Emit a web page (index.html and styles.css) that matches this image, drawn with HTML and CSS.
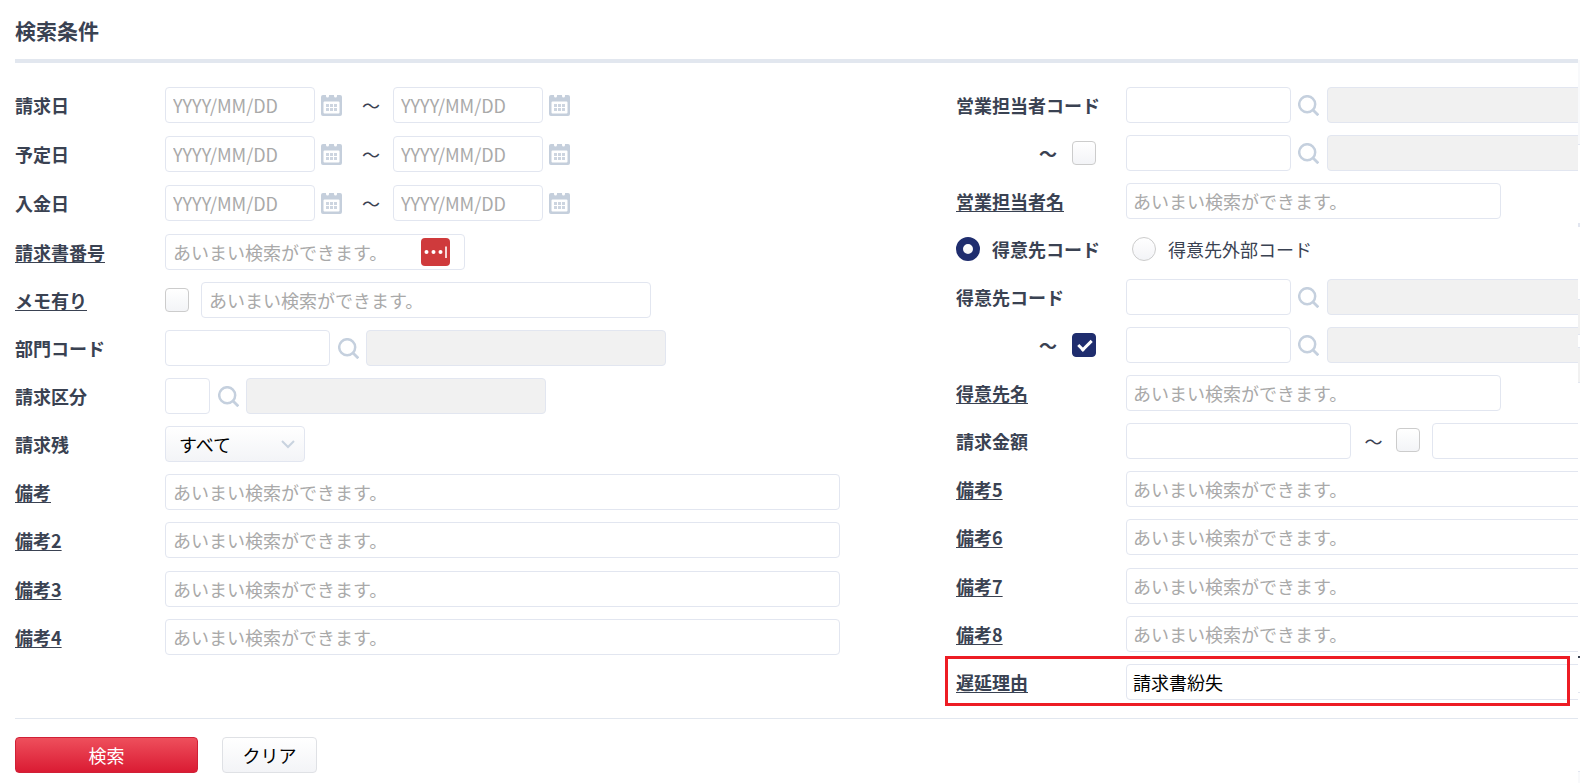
FILE: index.html
```html
<!DOCTYPE html>
<html lang="ja">
<head>
<meta charset="utf-8">
<title>検索条件</title>
<link rel="stylesheet" href="styles.css">
</head>
<body>
<svg class="defs" aria-hidden="true">
  <symbol id="cal" viewBox="0 0 21 21">
    <path fill="#c5cfdc" fill-rule="evenodd" d="M2 0H5V1Q5 2.500 6.500 2.500T8 1V0H13V1Q13 2.500 14.500 2.500T16 1V0H19Q21 0 21 2V19Q21 21 19 21H2Q0 21 0 19V2Q0 0 2 0ZM3.500 6.500Q2.500 6.500 2.500 7.500V17.500Q2.500 18.500 3.500 18.500H17.500Q18.500 18.500 18.500 17.500V7.500Q18.500 6.500 17.500 6.500Z"/>
    <path fill="#cdd5e0" d="M5 9h3v3H5zM9 9h3v3H9zM13 9h3v3h-3zM5 13h3v3H5zM9 13h3v3H9zM13 13h3v3h-3z"/>
  </symbol>
  <symbol id="mag" viewBox="0 0 21 21">
    <circle cx="9.200" cy="9.200" r="8" fill="none" stroke="#c5d0de" stroke-width="2.500"/>
    <path d="M14.800 14.800l5.500 5.500" fill="none" stroke="#c5d0de" stroke-width="2.700"/>
  </symbol>
</svg>
<form class="panel">
  <h1 class="title">検索条件</h1>
  <div class="columns">
    <div class="column column-left">
      <div class="row row-tall">
        <label class="label" for="bill-from">請求日</label>
        <input class="field date" id="bill-from" placeholder="YYYY/MM/DD"><button type="button" class="icon cal" aria-label="カレンダー"><svg><use href="#cal"/></svg></button><span class="tilde">～</span><input class="field date" aria-label="請求日 終了" placeholder="YYYY/MM/DD"><button type="button" class="icon cal" aria-label="カレンダー"><svg><use href="#cal"/></svg></button>
      </div>
      <div class="row row-tall">
        <label class="label" for="plan-from">予定日</label>
        <input class="field date" id="plan-from" placeholder="YYYY/MM/DD"><button type="button" class="icon cal" aria-label="カレンダー"><svg><use href="#cal"/></svg></button><span class="tilde">～</span><input class="field date" aria-label="予定日 終了" placeholder="YYYY/MM/DD"><button type="button" class="icon cal" aria-label="カレンダー"><svg><use href="#cal"/></svg></button>
      </div>
      <div class="row row-tall">
        <label class="label" for="pay-from">入金日</label>
        <input class="field date" id="pay-from" placeholder="YYYY/MM/DD"><button type="button" class="icon cal" aria-label="カレンダー"><svg><use href="#cal"/></svg></button><span class="tilde">～</span><input class="field date" aria-label="入金日 終了" placeholder="YYYY/MM/DD"><button type="button" class="icon cal" aria-label="カレンダー"><svg><use href="#cal"/></svg></button>
      </div>
      <div class="row">
        <label class="label fuzzy" for="bill-no">請求書番号</label>
        <div class="badged"><input class="field w300" id="bill-no" placeholder="あいまい検索ができます。"><svg class="badge" viewBox="0 0 29 28"><rect width="29" height="28" rx="4" fill="#cf3a3c"/><g fill="#fff"><circle cx="5.500" cy="14" r="2"/><circle cx="12.500" cy="14" r="2"/><circle cx="19.500" cy="14" r="2"/><path d="M24 8.500h2v11.500h-2z" opacity=".8"/></g></svg></div>
      </div>
      <div class="row">
        <label class="label fuzzy" for="memo">メモ有り</label>
        <input type="checkbox" class="check" aria-label="メモ有り"><input class="field w450 after-check" id="memo" placeholder="あいまい検索ができます。">
      </div>
      <div class="row">
        <label class="label" for="dept">部門コード</label>
        <input class="field w165" id="dept"><button type="button" class="icon" aria-label="部門を検索"><svg><use href="#mag"/></svg></button><input class="field w300" aria-label="部門名" disabled>
      </div>
      <div class="row">
        <label class="label" for="kind">請求区分</label>
        <input class="field w45" id="kind"><button type="button" class="icon" aria-label="区分を検索"><svg><use href="#mag"/></svg></button><input class="field w300" aria-label="区分名" disabled>
      </div>
      <div class="row">
        <label class="label" for="remain">請求残</label>
        <div class="select-wrap"><select class="select" id="remain"><option>すべて</option></select><svg class="chevron" viewBox="0 0 14 9"><path d="M1 1l6 6 6-6" fill="none" stroke="#c9d3df" stroke-width="2"/></svg></div>
      </div>
      <div class="row"><label class="label fuzzy" for="n1">備考</label><input class="field w675" id="n1" placeholder="あいまい検索ができます。"></div>
      <div class="row row-tall"><label class="label fuzzy" for="n2">備考2</label><input class="field w675" id="n2" placeholder="あいまい検索ができます。"></div>
      <div class="row"><label class="label fuzzy" for="n3">備考3</label><input class="field w675" id="n3" placeholder="あいまい検索ができます。"></div>
      <div class="row"><label class="label fuzzy" for="n4">備考4</label><input class="field w675" id="n4" placeholder="あいまい検索ができます。"></div>
    </div>
    <div class="column column-right">
      <div class="row">
        <label class="label" for="rep">営業担当者コード</label>
        <input class="field w165" id="rep"><button type="button" class="icon" aria-label="担当者を検索"><svg><use href="#mag"/></svg></button><input class="field w300" aria-label="担当者名" disabled>
      </div>
      <div class="row">
        <div class="label range"><span>～</span><input type="checkbox" class="check" aria-label="担当者の範囲指定"></div>
        <input class="field w165" aria-label="営業担当者コード 終了"><button type="button" class="icon" aria-label="担当者を検索"><svg><use href="#mag"/></svg></button><input class="field w300" aria-label="担当者名 終了" disabled>
      </div>
      <div class="row"><label class="label fuzzy" for="rep-name">営業担当者名</label><input class="field w375" id="rep-name" placeholder="あいまい検索ができます。"></div>
      <div class="row radios">
        <label class="choice chosen"><input type="radio" class="radio" name="code" checked>得意先コード</label>
        <label class="choice"><input type="radio" class="radio" name="code">得意先外部コード</label>
      </div>
      <div class="row">
        <label class="label" for="cust">得意先コード</label>
        <input class="field w165" id="cust"><button type="button" class="icon" aria-label="得意先を検索"><svg><use href="#mag"/></svg></button><input class="field w300" aria-label="得意先" disabled>
      </div>
      <div class="row">
        <div class="label range"><span>～</span><input type="checkbox" class="check" aria-label="得意先の範囲指定" checked></div>
        <input class="field w165" aria-label="得意先コード 終了"><button type="button" class="icon" aria-label="得意先を検索"><svg><use href="#mag"/></svg></button><input class="field w300" aria-label="得意先 終了" disabled>
      </div>
      <div class="row"><label class="label fuzzy" for="cust-name">得意先名</label><input class="field w375" id="cust-name" placeholder="あいまい検索ができます。"></div>
      <div class="row">
        <label class="label" for="amount">請求金額</label>
        <input class="field w225" id="amount"><span class="tilde tilde-near">～</span><input type="checkbox" class="check" aria-label="金額の範囲指定"><input class="field w225 after-check" aria-label="請求金額 上限">
      </div>
      <div class="row"><label class="label fuzzy" for="n5">備考5</label><input class="field w675" id="n5" placeholder="あいまい検索ができます。"></div>
      <div class="row row-tall"><label class="label fuzzy" for="n6">備考6</label><input class="field w675" id="n6" placeholder="あいまい検索ができます。"></div>
      <div class="row"><label class="label fuzzy" for="n7">備考7</label><input class="field w675" id="n7" placeholder="あいまい検索ができます。"></div>
      <div class="row"><label class="label fuzzy" for="n8">備考8</label><input class="field w675" id="n8" placeholder="あいまい検索ができます。"></div>
      <div class="row marked"><label class="label fuzzy" for="late">遅延理由</label><input class="field w675" id="late" value="請求書紛失"></div>
    </div>
  </div>
  <div class="actions">
    <button type="submit" class="button primary">検索</button>
    <button type="reset" class="button">クリア</button>
  </div>
</form>
<div class="edge" aria-hidden="true"></div>
</body>
</html>
```
FILE: styles.css
```css
*, *::before, *::after { box-sizing: border-box; }
body {
  margin: 0;
  background: #fff;
  color: #3a4252;
  font: 18px/26px "Noto Sans CJK JP", sans-serif;
  overflow: hidden;
}
input, button, select { font: inherit; margin: 0; }
.defs { display: none; }
.panel { padding-left: 15px; margin-right: 2px; overflow: hidden; }
.title {
  margin: 0;
  padding: 15px 0 14px;
  border-bottom: 4px solid #e2e7ef;
  font-size: 21px;
  line-height: 30px;
  font-weight: 700;
}
.columns {
  display: grid;
  grid-template-columns: minmax(0, 941fr) minmax(0, 622fr);
  padding: 24px 0 18px;
  border-bottom: 1px solid #e2e7ef;
}
.column { display: flex; flex-direction: column; gap: 12px; min-width: 0; }
.row { display: flex; align-items: center; height: 36px; }
.row-tall { height: 37px; padding-bottom: 1px; }
.label { flex: none; width: 150px; font-weight: 700; }
.column-right .label { width: 170px; }
.fuzzy { text-decoration: underline; text-decoration-thickness: 1px; text-underline-offset: 2px; }
.field {
  flex: none;
  height: 36px;
  padding: 0 7px;
  border: 1px solid #e2e6f0;
  border-radius: 4px;
  background: #fff;
  color: #000;
  outline: 0;
}
.column-right .field { padding: 0 6px; }
.field::placeholder { color: #a9a9a9; opacity: 1; }
.field:disabled { background: #f1f1f1; }
.date { width: 150px; }
.w45 { width: 45px; }
.w165 { width: 165px; }
.w225 { width: 225px; }
.w300 { width: 300px; }
.w375 { width: 375px; }
.w450 { width: 450px; }
.w675 { width: 675px; }
.icon {
  flex: none;
  width: 36px;
  height: 36px;
  padding: 0 7px 0 8px;
  border: 0;
  background: none;
}
.column-right .icon { padding: 0 8px 0 7px; }
.icon svg { display: block; width: 21px; height: 21px; }
.icon.cal { width: 27px; padding: 0 0 0 6px; }
.tilde { flex: none; width: 51px; padding-left: 7px; text-align: center; }
.tilde-near { width: 45px; padding-left: 0; }
.badged, .select-wrap { position: relative; height: 36px; }
.badge { position: absolute; right: 15px; top: 4px; width: 29px; height: 28px; }
.check, .radio {
  flex: none;
  appearance: none;
  width: 24px;
  height: 24px;
  border: 1px solid #ccc;
  border-radius: 4px;
  background: linear-gradient(#fff, #f3f4f7);
}
.check:checked {
  border-color: #1f2d6e;
  background: #1f2d6e;
}
.check:checked::after {
  content: "";
  display: block;
  width: 8px;
  height: 14px;
  margin: 3px 0 0 8px;
  border: solid #fff;
  border-width: 0 3px 3px 0;
  transform: rotate(45deg);
}
.tilde-near + .check { margin-bottom: 2px; }
.radio { border-radius: 50%; }
.radio:checked { border: 7px solid #1f2d6e; }
.after-check { margin-left: 12px; }
.range { display: flex; align-items: center; justify-content: flex-end; gap: 15px; padding: 0 30px 0 0; }
.radios { gap: 32px; }
.choice { display: flex; align-items: center; gap: 12px; }
.chosen { font-weight: 700; }
.marked { position: relative; }
.marked::after {
  content: "";
  position: absolute;
  inset: -8px 8px -6px -11px;
  border: 3px solid #ed1c24;
  pointer-events: none;
}
.select {
  appearance: none;
  width: 140px;
  height: 36px;
  padding: 0 13px;
  border: 1px solid #e2e6f0;
  border-radius: 4px;
  background: linear-gradient(#fff, #f3f4f7);
  color: #000;
}
.chevron { position: absolute; right: 10px; top: 14px; width: 14px; height: 9px; }
.actions { display: flex; gap: 24px; padding: 18px 0 10px; }
.button {
  width: 95px;
  height: 36px;
  padding: 0;
  border: 1px solid #dfe1e5;
  border-radius: 4px;
  background: linear-gradient(#fff, #f3f4f7);
  color: #000;
}
.primary {
  width: 183px;
  border-color: #d02036;
  background: linear-gradient(#ee4f5c, #da1b33);
  color: #fff;
}
/* sliver of the neighbouring panel along the right side */
.edge {
  position: absolute;
  top: 0;
  right: 0;
  width: 2px;
  height: 100%;
  background: linear-gradient(#fff 60px, #f8f9fb 60px 144px, #e2e6f0 144px 145px, #fff 145px 223px, #e2e6f0 223px 227px, #fff 227px 299px, #e2e6f0 299px 300px, #f1f1f1 300px 334px, #e2e6f0 334px 335px, #fff 335px 347px, #e2e6f0 347px 348px, #f1f1f1 348px 382px, #e2e6f0 382px 383px, #fff 383px 656px, #3a4252 656px 658px, #fff 658px 692px, #e2e6f0 692px 693px, #fff 693px 771px, #e2e6f0 771px 772px, #f8f9fb 772px);
}
```
